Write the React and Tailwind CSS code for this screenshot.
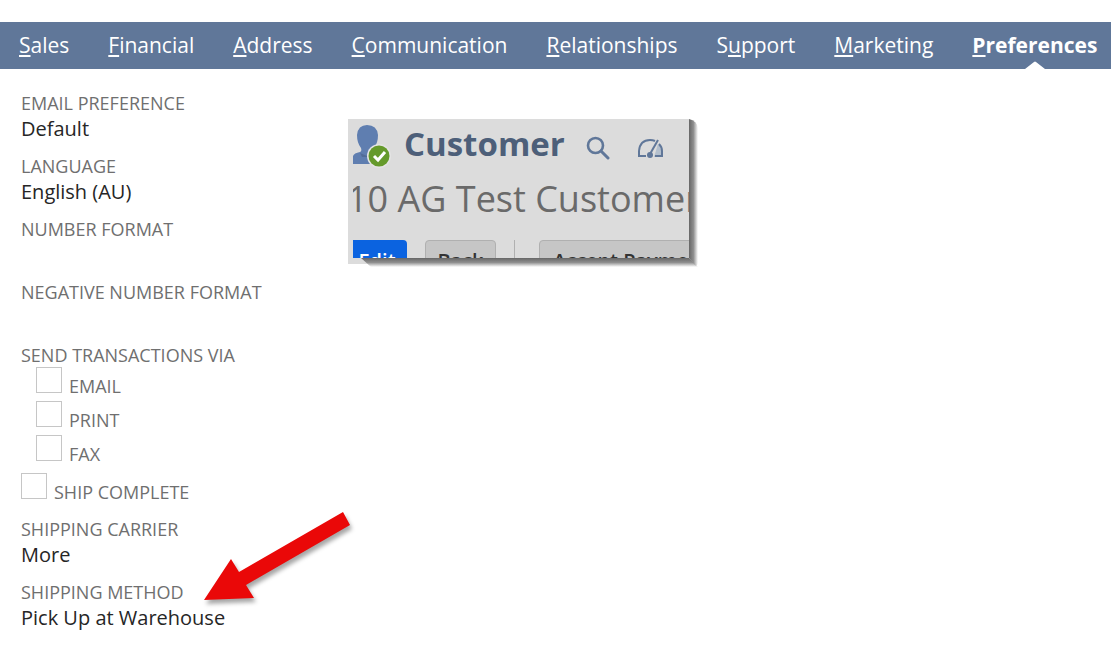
const tabs = [
  { key: 'S', rest: 'ales' },
  { key: 'F', rest: 'inancial' },
  { key: 'A', rest: 'ddress' },
  { key: 'C', rest: 'ommunication' },
  { key: 'R', rest: 'elationships' },
  { before: 'S', key: 'u', rest: 'pport' },
  { key: 'M', rest: 'arketing' },
  { key: 'P', rest: 'references', active: true },
];

const Tab = ({ before, mnemonic, rest, active }) => (
  <a
    href="#"
    className={
      active
        ? 'relative flex h-full items-center font-bold'
        : 'relative flex h-full items-center'
    }
    aria-current={active ? 'page' : undefined}
  >
    <span>
      {before}
      <span className="underline decoration-2 underline-offset-2">{mnemonic}</span>
      {rest}
    </span>
    {active && (
      <svg className="absolute bottom-0 left-1/2 h-2 w-6 -translate-x-1/2" viewBox="0 0 24 8">
        <path d="M2 8 L11 1 Q12 0 13 1 L22 8 Z" fill="#fff" />
      </svg>
    )}
  </a>
);

const Field = ({ label, value, children }) => (
  <div className="relative mb-[11px]">
    <dt className="text-lg leading-[26px] text-[#6f6f6f]">{label}</dt>
    <dd className="h-[26px] text-xl leading-[26px] text-[#262626]">{value}</dd>
    {children}
  </div>
);

const Check = ({ label }) => (
  <label className="flex w-fit gap-[7px] text-lg leading-[26px] text-[#6f6f6f]">
    <input type="checkbox" className="size-[26px] appearance-none border border-[#c6c6c6] bg-white" />
    <span className="pt-[6px]">{label}</span>
  </label>
);

const Arrow = () => (
  <svg
    className="absolute -top-[72px] left-[179px] h-[104px] w-[160px] overflow-visible"
    viewBox="0 0 160 104"
    aria-hidden="true"
  >
    <path
      d="M4 93 L31 52 L39 65 L143 5 L150 18 L46 78 L54 91 Z"
      fill="#ea0808"
      className="drop-shadow-[2px_4px_2px_rgba(0,0,0,0.35)]"
    />
  </svg>
);

const CustomerIcon = () => (
  <svg className="h-[44px] w-[40px] shrink-0" viewBox="0 0 40 44">
    <path
      d="M0 39 V31 Q1 28 7 27 Q9 26 8 23 Q4 18 4 10 Q5 0 14 0 Q24 0 25 10 Q25 18 21 23 Q20 26 22 27 Q30 29 30 33 V39 Z"
      fill="#5f7eb0"
    />
    <path d="M7 28 L14 31 L21 28 L18 32 H9 Z" fill="#526c98" />
    <circle cx="26" cy="31" r="12" fill="#e4e4e4" />
    <circle cx="26" cy="31" r="10.5" fill="#659a2b" />
    <path d="M21 31 L25 35 L32 27" fill="none" stroke="#fff" strokeWidth="3" />
  </svg>
);

const CustomerHeader = () => (
  <section className="w-[341px] bg-[#dcdcdc] pb-[6px] pl-[5px]">
    <div className="relative h-[139px]">
      {/* Drop shadow along the bottom and right edges */}
      <svg
        className="absolute top-0 left-0 h-[147px] w-[345px] overflow-visible"
        viewBox="0 0 345 147"
        aria-hidden="true"
      >
        <defs>
          <linearGradient id="bottomShade" x1="0" y1="0" x2="0" y2="1">
            <stop offset="0" stopColor="#666" />
            <stop offset="0.5" stopColor="#8f8f8f" />
            <stop offset="1" stopColor="#fff" />
          </linearGradient>
          <linearGradient id="rightShade" x1="0" y1="0" x2="1" y2="0">
            <stop offset="0" stopColor="#666" />
            <stop offset="0.5" stopColor="#8f8f8f" />
            <stop offset="1" stopColor="#fff" />
          </linearGradient>
        </defs>
        <path d="M8 139 H336 L345 148 H18 Z" fill="url(#bottomShade)" />
        <path d="M336 0 Q344 2 345 9 V144 Q344 148 342 146 L336 139 Z" fill="url(#rightShade)" />
      </svg>
      <div className="relative h-full overflow-hidden bg-[#dcdcdc]">
        <div className="flex h-[50px] pt-[6px]">
          <CustomerIcon />
          <h1 className="ml-[11px] text-[33px] leading-[38px] font-bold text-[#4d5f79]">Customer</h1>
          <button type="button" aria-label="Search" className="ml-[21px] h-[46px]">
            <svg className="size-6" viewBox="0 0 24 24" fill="none" stroke="#607799">
              <circle cx="9.5" cy="9.5" r="7.5" strokeWidth="2.6" />
              <path d="M15 15 L22 22" strokeWidth="3" strokeLinecap="round" />
            </svg>
          </button>
          <button type="button" aria-label="Dashboard" className="ml-[27px] h-[46px]">
            <svg className="h-5 w-[26px]" viewBox="0 0 26 20" fill="none" stroke="#607799">
              <path d="M9 18 H2 V13 Q3 2 13 2 Q16 2 18 3" strokeWidth="2" />
              <path d="M21 6 Q25 9 25 19 H17 Z" fill="#b3bfcd" stroke="none" />
              <path d="M22 6 Q25 9 25 13 V18 H18" strokeWidth="2" />
              <path d="M13 16 L21 2" strokeWidth="2" />
              <circle cx="13" cy="17" r="3" fill="#607799" stroke="none" />
            </svg>
          </button>
        </div>
        <p className="-ml-[6px] h-[71px] pt-[5px] text-4xl leading-[50px] whitespace-nowrap text-[#6a6a6a]">
          10 AG Test Customer
        </p>
        <div className="flex text-xl leading-[26px] font-semibold whitespace-nowrap text-[#333]">
          <button type="button" className="h-9 w-[54px] shrink-0 rounded-tr-sm bg-[#0b63e0] pt-[6px] pr-[6px] text-white">
            Edit
          </button>
          <button type="button" className="ml-[18px] h-9 w-[71px] shrink-0 rounded-sm border border-[#b0b0b0] bg-[#c6c6c6] pt-[5px]">
            Back
          </button>
          <span className="ml-[18px] h-9 border-l border-[#b0b0b0]" />
          <button type="button" className="ml-6 h-9 shrink-0 rounded-sm border border-[#b0b0b0] bg-[#c6c6c6] px-[13px] pt-[5px]">
            Accept Payment
          </button>
        </div>
      </div>
    </div>
  </section>
);

export default function App() {
  return (
    <div className="overflow-x-hidden bg-white pt-[22px] font-['Open_Sans','Noto_Sans',sans-serif]">
      <nav className="flex h-[47px] items-center gap-[39px] bg-[#607799] px-[19px] text-[21px] whitespace-nowrap text-white">
        {tabs.map((tab) => (
          <Tab
            key={tab.key}
            before={tab.before}
            mnemonic={tab.key}
            rest={tab.rest}
            active={tab.active}
          />
        ))}
      </nav>

      <main className="flex items-start px-[21px] pt-[21px]">
        <div className="w-[327px] shrink-0">
          <dl>
            <Field label="EMAIL PREFERENCE" value="Default" />
            <Field label="LANGUAGE" value="English (AU)" />
            <Field label="NUMBER FORMAT" />
            <Field label="NEGATIVE NUMBER FORMAT" />
          </dl>

          <fieldset>
            <legend className="text-lg leading-[26px] text-[#6f6f6f]">SEND TRANSACTIONS VIA</legend>
            <div className="-mt-px ml-[15px] flex flex-col gap-[2px]">
              <Check label="EMAIL" />
              <Check label="PRINT" />
              <Check label="FAX" />
            </div>
          </fieldset>
          <div className="mt-[6px] mb-[11px]">
            <Check label="SHIP COMPLETE" />
          </div>

          <dl>
            <Field label="SHIPPING CARRIER" value="More" />
            <Field label="SHIPPING METHOD" value="Pick Up at Warehouse">
              <Arrow />
            </Field>
          </dl>
        </div>

        <div className="pt-[29px]">
          <CustomerHeader />
        </div>
      </main>
    </div>
  );
}
